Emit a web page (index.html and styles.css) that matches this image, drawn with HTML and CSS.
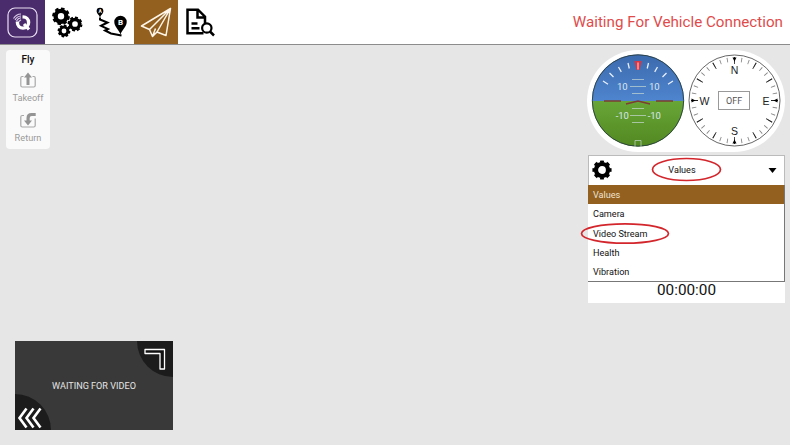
FILE: index.html
```html
<!DOCTYPE html>
<html lang="en">
<head>
<meta charset="utf-8">
<title>Fly View</title>
<link rel="stylesheet" href="styles.css">
</head>
<body>
<div class="app">
  <header class="toolbar">
    <nav class="tabs">
      <svg class="tab tab-home" viewBox="0 0 45 44">
        <rect x="8" y="8" width="29" height="29" rx="7" fill="none" stroke="#e9e0f2" stroke-width="1.2"/>
        <circle cx="23" cy="22.500" r="5.600" fill="none" stroke="#fff" stroke-width="3.400"/>
        <path d="M12 12h10.500v9.500H12z" fill="#4a2b6c"/>
        <path d="M24 24l5 5.500" stroke="#fff" stroke-width="3.200"/>
        <path d="M13.500 18.500a9 9 0 0 1 7.500-4.500M15 20a7.500 7.500 0 0 1 6-4M16.500 21a6 6 0 0 1 4.500-3.200M18.500 21.800l2.500-2" fill="none" stroke="#d9cce8" stroke-width="1.100"/>
      </svg>
      <svg class="tab" viewBox="45 0 44 44" fill="none" stroke="#000">
        <circle cx="61" cy="16.300" r="5.400" stroke-width="4.400"/>
        <circle cx="61" cy="16.300" r="7.700" stroke-width="2.400" pathLength="40" stroke-dasharray="2.900 2.100"/>
        <circle cx="75" cy="24" r="4.600" stroke-width="3.500"/>
        <circle cx="75" cy="24" r="6.400" stroke-width="2.200" pathLength="40" stroke-dasharray="2.900 2.100"/>
        <circle cx="64" cy="31" r="3.900" stroke-width="3"/>
        <circle cx="64" cy="31" r="5.400" stroke-width="2" pathLength="40" stroke-dasharray="2.900 2.100"/>
      </svg>
      <svg class="tab" viewBox="89 0 45 44">
        <path d="M100 17.500v2l7.500 3-6.500 3.300 7 3.200-3 1.500 6 3 10.500 2" fill="none" stroke="#000" stroke-width="2"/>
        <path d="M100 17.500c-1-3-3.400-4-3.400-6.300a3.400 3.400 0 0 1 6.800 0c0 2.300-2.400 3.300-3.400 6.300zM120.500 34.500c-1.500-5-6.200-7.500-6.200-12.500a6.200 6.200 0 0 1 12.400 0c0 5-4.700 7.500-6.200 12.500z"/>
        <text x="98.400" y="13" class="pin-a">A</text><text x="117.900" y="25" class="pin-b">B</text>
      </svg>
      <svg class="tab tab-fly" viewBox="134 0 44 44" fill="none" stroke="#fff6e9" stroke-width="1.500" stroke-linejoin="round">
        <path d="M170.500 8.500L141.500 26l8 3.500zM170.500 8.500L149.500 29.500l3 7 4.500-4.500zM170.500 8.500L157 32l9 3.500zM152.500 36.500l3-8"/>
      </svg>
      <svg class="tab" viewBox="178 0 44 44" fill="none" stroke="#000" stroke-width="2.500">
        <path d="M203.500 33.200H187.500V9.700H198l7 7V24M197.500 10v7.500h7M191.500 23.500h6M191.500 28.200h8"/>
        <circle cx="206.800" cy="28" r="4.700" stroke-width="2.200"/>
        <path d="M210 31.500l4 4"/>
      </svg>
    </nav>
    <div class="status">Waiting For Vehicle Connection</div>
  </header>

  <main class="view">
    <aside class="left">
      <section class="fly-tools">
        <h1>Fly</h1>
        <svg viewBox="0 0 16 17" class="tool-icon"><path d="M3.500 4.500H2Q.8 4.500.8 6v7.500Q.8 15 2.300 15h11.400q1.500 0 1.500-1.500V6q0-1.500-1.200-1.500h-1.500" fill="none" stroke="#a8a8a8" stroke-width="1.200"/><path d="M8 .5l4 5H9.500V13h-3V5.500H4z" fill="#949494"/></svg>
        <span>Takeoff</span>
        <svg viewBox="0 0 16 17" class="tool-icon return"><path d="M4 3.500H2.300Q.8 3.500.8 5v8.500Q.8 15 2.300 15h11.400q1.500 0 1.500-1.500V6.500" fill="none" stroke="#a8a8a8" stroke-width="1.200"/><path d="M8 13.500l4-5H9.700V6q0-2 2-2h4V1H11.500Q6.500 1 6.500 6v2.500H4z" fill="#949494"/></svg>
        <span>Return</span>
      </section>
      <section class="video">
        <svg class="video-art" viewBox="0 0 158 89">
          <path d="M122 0a36 36 0 0 0 36 36V0zM0 53a36 36 0 0 1 36 36H0z" fill="#1c1c1c"/>
          <path d="M130 8.500h19.500v19.500h-4.500V12.500H130z" fill="#111" stroke="#fff" stroke-width="1.300" stroke-linejoin="round"/>
          <path d="M11.500 67.500L4.500 77l7 9.500M18.500 67.500L11.500 77l7 9.500M25.500 67.500L18.500 77l7 9.500" fill="none" stroke="#fff" stroke-width="2.600"/>
        </svg>
        <span class="video-label">WAITING FOR VIDEO</span>
      </section>
    </aside>

    <aside class="right">
      <div class="instruments">
        <svg viewBox="587 50 198 102" class="dials">
          <defs>
            <linearGradient id="sky" x2="0" y2="1"><stop stop-color="#3c69ad"/><stop offset="1" stop-color="#4e85ce"/></linearGradient>
            <linearGradient id="ground" x2="0" y2="1"><stop stop-color="#68a637"/><stop offset="1" stop-color="#528820"/></linearGradient>
            <clipPath id="ball"><circle cx="638" cy="100.500" r="46"/></clipPath>
          </defs>
          <g clip-path="url(#ball)">
            <rect x="592" y="54" width="92" height="47" fill="url(#sky)"/>
            <rect x="592" y="101" width="92" height="46" fill="url(#ground)"/>
          </g>
          <circle cx="638" cy="100.500" r="45.700" fill="none" stroke="#273d3f" stroke-width=".9"/>
          <path d="M628 63l1.300 5.500M618.500 67l2.800 4.800M609.500 73l4 4M603 81l5 3.200M648.500 63l-1.300 5.500M657.500 67l-2.800 4.800M666.500 73l-4 4M673 81l-5 3.200" stroke="#e9f0fa" stroke-width="1.300"/>
          <path d="M634.500 61h7l-2 9h-3z" fill="#dc3442"/><path d="M638 62.500v7" stroke="#ffdce0"/>
          <path d="M632 79.500h12M630 86.500h16M632 93.500h12M632 108.500h12M630 115.500h16M632 122.500h12M635 147v-6.500h6v6.500" fill="none" stroke="#c6d9d2" stroke-width=".7"/>
          <g class="pitch"><text x="622.300" y="90">10</text><text x="654.300" y="90">10</text><text x="622.300" y="119">-10</text><text x="654.300" y="119">-10</text></g>
          <path d="M604 101h17M656 101h17M626 104l12-3 12 3" fill="none" stroke="#7c3c32" stroke-width="1.400"/>

          <circle cx="734.500" cy="100.500" r="45.500" fill="#fff" stroke="#555" stroke-width=".9"/>
          <circle cx="734.500" cy="100.500" r="41" fill="none" stroke="#888" stroke-width="4.500" pathLength="360" stroke-dasharray="1.200 8.800" stroke-dashoffset=".6"/>
          <circle cx="734.500" cy="100.500" r="40" fill="none" stroke="#222" stroke-width="7" pathLength="360" stroke-dasharray="1.300 28.700" stroke-dashoffset=".65"/>
          <path d="M732.500 57.500h4l-2 4zM732.500 143.500h4l-2-4zM691.500 98.500v4l4-2zM777.500 98.500v4l-4-2z"/>
          <g class="cardinal"><text x="734.500" y="74.300">N</text><text x="734.500" y="135.300">S</text><text x="704.500" y="104.500">W</text><text x="766" y="104.500">E</text></g>
          <rect x="718.500" y="91.500" width="31" height="18" fill="#fff" stroke="#999"/>
          <text x="734.200" y="104" class="off">OFF</text>
        </svg>
      </div>

      <section class="values">
        <div class="picker">
          <svg class="gear" viewBox="0 0 20 20" fill="none" stroke="#000"><circle cx="10" cy="10" r="6" stroke-width="4.200"/><circle cx="10" cy="10" r="8.300" stroke-width="2.600" pathLength="40" stroke-dasharray="2.900 2.100" stroke-dashoffset="1.450"/></svg>
          <span class="current">Values</span>
          <svg class="caret" viewBox="0 0 8 5"><path d="M0 0h8L4 5z"/></svg>
        </div>
        <ul class="menu">
          <li class="selected">Values</li><li>Camera</li><li>Video Stream</li><li>Health</li><li>Vibration</li>
        </ul>
        <div class="timer">00:00:00</div>
        <svg class="marks" viewBox="580 155 205 148" fill="none" stroke="#d3262c" stroke-width="1.700"><ellipse cx="686.500" cy="169.500" rx="34" ry="11"/><ellipse cx="625" cy="233.500" rx="43.500" ry="9.700"/></svg>
      </section>
    </aside>
  </main>
</div>
</body>
</html>
```
FILE: styles.css
```css
* { box-sizing: border-box; }
body { margin: 0; background: #fff; font-family: Roboto, sans-serif; color: #111; }
.app { width: 790px; height: 445px; background: #e6e6e6; display: flex; flex-direction: column; }
.toolbar { height: 45px; background: #fff; border-bottom: 1px solid #8c8c8c; display: flex; justify-content: space-between; }
.tabs { display: flex; }
.tab { height: 44px; width: 44px; display: block; }
.tab:nth-child(odd):not(:last-child) { width: 45px; }
.tab-home { background: #4a2b6c; }
.tab-fly { background: #93601f; }
.pin-a { font-size: 5px; font-weight: 700; fill: #fff; }
.pin-b { font-size: 8px; font-weight: 700; fill: #fff; }
.status { color: #df4b4b; font-size: 15.200px; line-height: 45px; padding-right: 7px; white-space: nowrap; }
.view { flex: 1; display: flex; justify-content: space-between; }
.left { display: flex; flex-direction: column; justify-content: space-between; padding: 5px 0 15px 6px; }
.fly-tools { width: 44px; height: 99px; background: #fafafa; border-radius: 4px; display: flex; flex-direction: column; align-items: center; }
.fly-tools h1 { margin: 3px 0 5px; font-size: 10px; line-height: 14px; font-weight: 500; }
.fly-tools span { font-size: 9.200px; line-height: 12px; color: #9b9b9b; margin-top: 3px; }
.tool-icon { width: 16px; height: 17px; flex: none; }
.return { margin-top: 8px; }
.video { width: 158px; height: 89px; margin-left: 9px; background: #393939; position: relative; display: grid; place-items: center; }
.video-art { position: absolute; inset: 0; width: 158px; height: 89px; }
.video-label { font-size: 9.100px; color: #e5e5e5; position: relative; }
.right { width: 198px; margin-right: 5px; padding-top: 5px; display: flex; flex-direction: column; gap: 3px; }
.instruments { height: 102px; background: #fff; border-radius: 51px; }
.dials { display: block; width: 198px; height: 102px; }
.pitch { font-size: 9.500px; fill: #dce8ee; text-anchor: middle; }
.cardinal { font: 10.500px "Liberation Sans", sans-serif; fill: #222; text-anchor: middle; }
.off { font-size: 9px; fill: #555; text-anchor: middle; }
.values { position: relative; height: 148px; margin-left: 1px; background: #fff; font-size: 9.100px; display: flex; flex-direction: column; }
.picker { height: 30px; border: 1px solid #bbb; border-bottom: 0; display: grid; grid-template-columns: 26px 1fr 23px; align-items: center; }
.gear { width: 20px; height: 20px; margin: -2px 0 0 3px; }
.picker .current { text-align: center; margin: -2px 12px 0 0; }
.caret { width: 9px; height: 5px; margin-left: 7px; }
.menu { list-style: none; margin: 0; padding: 0; height: 97px; border: solid #777; border-width: 0 1px 1px 0; }
.menu li { height: 19.300px; line-height: 20px; padding-left: 5px; }
.menu .selected { background: #93601f; color: #eee3d3; }
.timer { text-align: center; font-size: 15.300px; line-height: 17px; }
.marks { position: absolute; right: 0; top: 0; width: 205px; height: 148px; }
```
